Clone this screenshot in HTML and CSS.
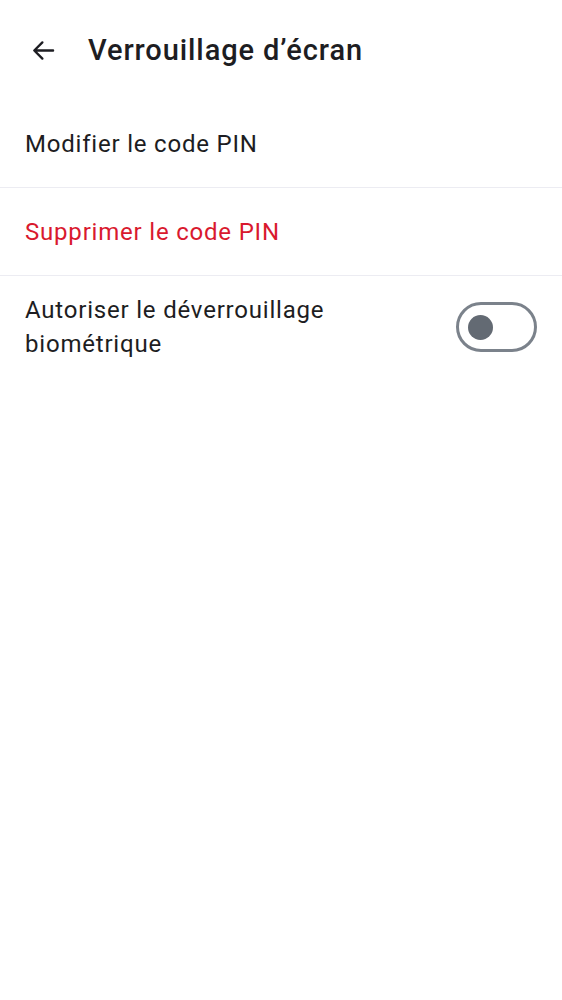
FILE: index.html
```html
<!DOCTYPE html>
<html lang="fr">
<head>
<meta charset="utf-8">
<title>Verrouillage d’écran</title>
<link rel="stylesheet" href="styles.css">
</head>
<body>
<header class="topbar">
  <button class="back" aria-label="Retour">
    <svg width="27" height="27" viewBox="0 0 24 24"><path d="M20.5 12H4M11 4.8l-7.2 7.2 7.2 7.2" fill="none" stroke="#1d1d22" stroke-width="2.1" stroke-linecap="round" stroke-linejoin="round"/></svg>
  </button>
  <h1 class="title">Verrouillage d’écran</h1>
</header>
<main class="list">
  <div class="row">Modifier le code PIN</div>
  <div class="row danger">Supprimer le code PIN</div>
  <div class="row toggle-row">
    <span class="label">Autoriser le déverrouillage biométrique</span>
    <span class="switch"><span class="knob"></span></span>
  </div>
</main>
</body>
</html>
```
FILE: styles.css
```css
html, body {
  margin: 0;
  padding: 0;
  background: #ffffff;
}
body {
  font-family: Roboto, "Noto Sans", sans-serif;
  color: #1d1d22;
}
.topbar {
  height: 100px;
  display: flex;
  align-items: center;
  padding: 0 25px;
  box-sizing: border-box;
}
.back {
  width: 36px;
  height: 36px;
  padding: 0;
  margin: 0 27px 0 0;
  border: 0;
  background: none;
  display: flex;
  align-items: center;
  justify-content: center;
}
.title {
  margin: 0;
  font-size: 29px;
  font-weight: 500;
  letter-spacing: 0.9px;
}
.list {
  display: flex;
  flex-direction: column;
}
.row {
  min-height: 87px;
  display: flex;
  align-items: center;
  padding: 0 25px;
  font-size: 24px;
  letter-spacing: 0.8px;
  border-bottom: 1.5px solid #ececf2;
}
.danger {
  color: #d9192e;
}
.toggle-row {
  border-bottom: 0;
  justify-content: space-between;
  align-items: center;
  padding-top: 17px;
  padding-bottom: 16px;
  min-height: 0;
}
.label {
  line-height: 34px;
  max-width: 340px;
}
.switch {
  width: 81px;
  height: 50px;
  box-sizing: border-box;
  border: 3px solid #7b828b;
  border-radius: 25px;
  display: flex;
  align-items: center;
  padding-left: 9px;
  flex-shrink: 0;
}
.knob {
  width: 25px;
  height: 25px;
  border-radius: 50%;
  background: #636a73;
}
```
